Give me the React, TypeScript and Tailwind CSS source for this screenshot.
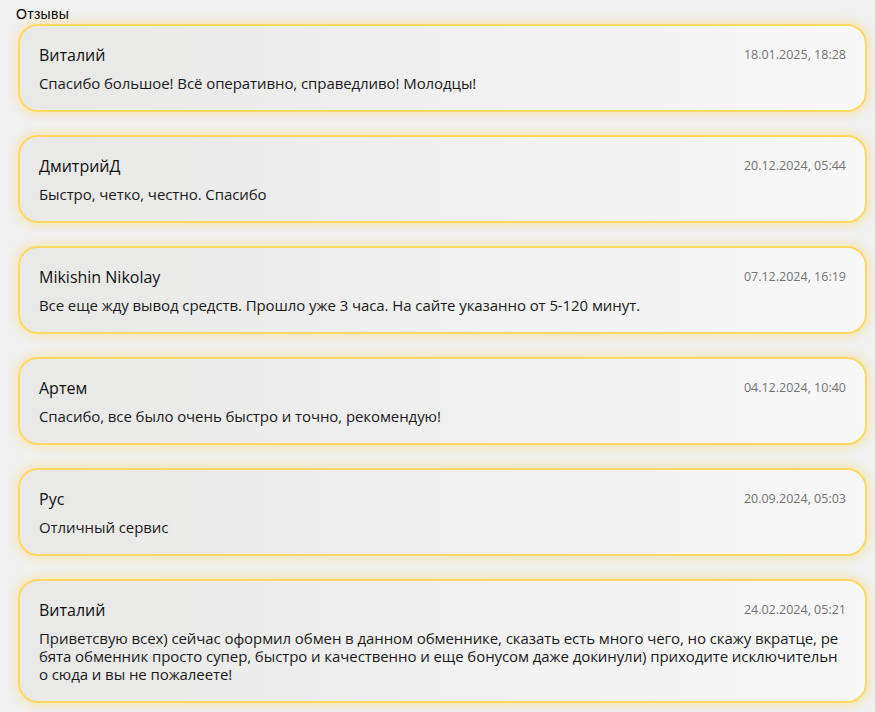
import React from "react";

interface Review {
    name: string;
    date: string;
    text: string;
}

const reviews: Review[] = [
    {
        name: "Виталий",
        date: "18.01.2025, 18:28",
        text: "Спасибо большое! Всё оперативно, справедливо! Молодцы!",
    },
    {
        name: "ДмитрийД",
        date: "20.12.2024, 05:44",
        text: "Быстро, четко, честно. Спасибо",
    },
    {
        name: "Mikishin Nikolay",
        date: "07.12.2024, 16:19",
        text: "Все еще жду вывод средств. Прошло уже 3 часа. На сайте указанно от 5-120 минут.",
    },
    {
        name: "Артем",
        date: "04.12.2024, 10:40",
        text: "Спасибо, все было очень быстро и точно, рекомендую!",
    },
    {
        name: "Рус",
        date: "20.09.2024, 05:03",
        text: "Отличный сервис",
    },
    {
        name: "Виталий",
        date: "24.02.2024, 05:21",
        text: "Приветсвую всех) сейчас оформил обмен в данном обменнике, сказать есть много чего, но скажу вкратце, ребята обменник просто супер, быстро и качественно и еще бонусом даже докинули) приходите исключительно сюда и вы не пожалеете!",
    },
];

export default function App() {
    return (
        <div className="min-h-screen bg-[#f0f0f0] pl-[16px] pr-[8px] pt-[5px] pb-4">
            {/* Title */}
            <div className="text-[14px] leading-[18px] tracking-[0.3px] text-black font-['Liberation_Sans',sans-serif]">
                Отзывы
            </div>

            {/* Reviews list */}
            <div className="flex flex-col gap-[23px] mt-[1px] pl-[2px] font-['Open_Sans',sans-serif]">
                {reviews.map((review, i) => (
                    <div
                        key={i}
                        className="rounded-[20px] border-2 border-[#ffd862] bg-gradient-to-r from-[#e8e8e7] to-[#f8f8f9] shadow-[0_0_9px_3px_rgba(255,216,98,0.4)] pt-[19px] pb-[18px] px-[19px]"
                    >
                        <div className="flex justify-between items-center h-[20px]">
                            <span className="text-[16px] font-medium text-[#111]">
                                {review.name}
                            </span>
                            <span className="text-[12.5px] text-[#737373]">
                                {review.date}
                            </span>
                        </div>
                        <p className="mt-[9px] text-[15px] leading-[18px] tracking-[-0.08px] text-[#1a1a1a] break-all">
                            {review.text}
                        </p>
                    </div>
                ))}
            </div>
        </div>
    );
}
